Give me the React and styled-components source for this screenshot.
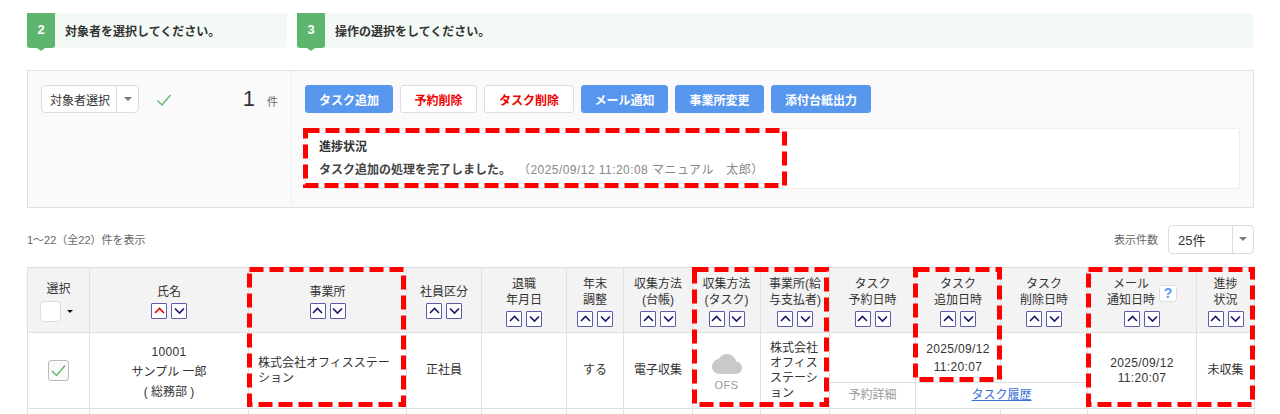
import React from 'react';
import styled, { createGlobalStyle } from 'styled-components';
import { MdCloud } from 'react-icons/md';

const GlobalStyle = createGlobalStyle`
  html, body {
    margin: 0;
    height: 414px;
    overflow: hidden;
    background: #fff;
    color: #333;
    font-family: "Liberation Sans", "Noto Sans CJK JP", sans-serif;
    font-size: 12px;
  }
`;

const Page = styled.div`
  position: relative;
  width: 1280px;
  height: 414px;
  overflow: hidden;
  box-sizing: border-box;
  padding: 13px 26px 0 27px;
`;

const Steps = styled.div`
  display: flex;
  gap: 10px;
`;

const Step = styled.div`
  display: flex;
  align-items: center;
  flex: ${(p) => (p.$wide ? '1' : '0 0 260px')};
  height: 35px;
  padding-bottom: 1px;
  box-sizing: border-box;
  background: #f3f9f4;
  border-radius: 3px;
  font-weight: 700;
  color: #333;
`;

const StepNumber = styled.span`
  position: relative;
  width: 28px;
  height: 35px;
  margin: 1px 10px 0 0;
  display: flex;
  align-items: center;
  justify-content: center;
  padding-bottom: 2px;
  box-sizing: border-box;
  background: #5eb56e;
  border-radius: 0 0 3px 3px;
  color: #fff;
  font-size: 13px;
  font-weight: 700;

  &::after {
    content: '';
    position: absolute;
    left: 10px;
    bottom: -3px;
    border-style: solid;
    border-width: 3px 4px 0 4px;
    border-color: #5eb56e transparent transparent transparent;
  }
`;

const Panel = styled.div`
  display: flex;
  height: 138px;
  margin-top: 22px;
  box-sizing: border-box;
  background: #fafafa;
  border: 1px solid #e0e0e0;
`;

const PanelLeft = styled.div`
  flex: 0 0 264px;
  box-sizing: border-box;
  display: flex;
  align-items: flex-start;
  padding: 14px 13px;
  border-right: 1px solid #eeeeee;
`;

const PanelRight = styled.div`
  flex: 1;
  box-sizing: border-box;
  padding: 14px 13px 19px 13px;
  display: flex;
  flex-direction: column;
  gap: 15px;
`;

const SelectBox = styled.div`
  display: flex;
  align-items: stretch;
  box-sizing: border-box;
  width: ${(p) => p.$width}px;
  height: ${(p) => p.$height}px;
  background: #fff;
  border: 1px solid #dcdcdc;
  border-radius: 4px;
  color: #333;
  font-size: ${(p) => p.$size}px;
`;

const SelectLabel = styled.span`
  flex: 1;
  display: flex;
  align-items: center;
  padding-left: ${(p) => p.$pad}px;
  border-right: 1px solid #dcdcdc;
  white-space: nowrap;
`;

const SelectArrow = styled.span`
  flex: 0 0 ${(p) => p.$width}px;
  display: flex;
  align-items: center;
  justify-content: center;

  &::after {
    content: '';
    border-style: solid;
    border-width: 4px 4px 0 4px;
    border-color: #777 transparent transparent transparent;
  }
`;

const CheckMark = styled.svg`
  width: 16px;
  height: 16px;
  margin: 7px 0 0 17px;
  fill: none;
  stroke: #5eb56e;
  stroke-width: 1.4;
`;

const Count = styled.div`
  display: flex;
  align-items: baseline;
  margin-left: auto;
  height: 28px;
  line-height: 28px;
  font-size: 22px;
  color: #333;
`;

const CountUnit = styled.span`
  margin-left: 12px;
  font-size: 11px;
  color: #666;
`;

const Buttons = styled.div`
  display: flex;
  gap: 7px;
`;

const ActionButton = styled.button`
  height: 28px;
  width: ${(p) => p.$width}px;
  padding: 0;
  box-sizing: border-box;
  border-radius: 3px;
  border: 1px solid ${(p) => (p.$danger ? '#dddddd' : '#5897ee')};
  background: ${(p) => (p.$danger ? '#fff' : '#5897ee')};
  color: ${(p) => (p.$danger ? '#f00000' : '#fff')};
  font-family: inherit;
  font-size: 12px;
  font-weight: 700;
`;

const Progress = styled.div`
  flex: 1;
  box-sizing: border-box;
  padding: 9px 13px;
  background: #fff;
  border: 1px solid #eeeeee;
  border-radius: 3px;
`;

const ProgressTitle = styled.div`
  font-weight: 700;
  line-height: 18px;
  color: #333;
`;

const ProgressLine = styled.div`
  margin-top: 5px;
  line-height: 18px;
  font-weight: 700;
  color: #444;
  white-space: pre;
`;

const ProgressMeta = styled.span`
  margin-left: 13px;
  font-weight: 400;
  font-size: 12px;
  letter-spacing: 0.45px;
  color: #888;
`;

const ListBar = styled.div`
  display: flex;
  align-items: center;
  justify-content: space-between;
  height: 30px;
  margin-top: 16px;
  font-size: 11px;
  color: #666;
`;

const PerPage = styled.div`
  display: flex;
  align-items: center;
  gap: 10px;
`;

const Table = styled.table`
  width: 1227px;
  margin-top: 13px;
  table-layout: fixed;
  border-collapse: collapse;
  font-size: 12px;
  color: #333;
`;

const HeadCell = styled.th`
  height: 65px;
  padding: 2px 0 0;
  box-sizing: border-box;
  vertical-align: middle;
  background: #f3f3f3;
  border: 1px solid #e0e0e0;
  font-weight: 400;
  line-height: 16px;
  color: #333;
`;

const HeadTitle = styled.div`
  position: relative;
  white-space: pre-line;
  margin-bottom: 3px;
  padding-right: ${(p) => (p.$help ? '22px' : '0')};
`;

const SortPair = styled.div`
  display: flex;
  justify-content: center;
  gap: 4px;
`;

const SortButton = styled.span`
  width: 16px;
  height: 16px;
  box-sizing: border-box;
  display: flex;
  align-items: center;
  justify-content: center;
  background: #fff;
  border: 1px solid #5c5caa;
  border-radius: 1px;

  svg {
    width: 11px;
    height: 8px;
    fill: none;
    stroke: ${(p) => (p.$active ? '#e8000b' : '#16166a')};
    stroke-width: 1.6;
  }
`;

const HelpBadge = styled.span`
  position: absolute;
  top: 9px;
  right: 19px;
  width: 18px;
  height: 17px;
  box-sizing: border-box;
  display: flex;
  align-items: center;
  justify-content: center;
  background: #fff;
  border: 1px solid #dddddd;
  border-radius: 3px;
  color: #5897ee;
  font-size: 14px;
  font-weight: 700;
`;

const SelectHead = styled.div`
  display: flex;
  align-items: center;
  justify-content: center;
  gap: 6px;
  margin-top: 4px;
  padding-right: 4px;
`;

const HeadCheck = styled.span`
  width: 21px;
  height: 21px;
  box-sizing: border-box;
  background: #fff;
  border: 1px solid #dcdcdc;
  border-radius: 4px;
`;

const HeadCaret = styled.span`
  border-style: solid;
  border-width: 3px 3px 0 3px;
  border-color: #111 transparent transparent transparent;
`;

const Cell = styled.td`
  height: ${(p) => p.$height || 'auto'};
  padding: ${(p) => p.$pad || '0'};
  box-sizing: border-box;
  border: 1px solid #e0e0e0;
  vertical-align: middle;
  text-align: ${(p) => p.$align || 'center'};
  line-height: ${(p) => p.$line || '15px'};
  white-space: pre-line;
  color: #333;
`;

const Numeric = styled.span`
  letter-spacing: 0.35px;
`;

const RowCheck = styled.span`
  display: inline-flex;
  align-items: center;
  justify-content: center;
  width: 21px;
  height: 21px;
  box-sizing: border-box;
  border: 1px solid #bbbbbb;
  border-radius: 3px;
  background: #fafafa;

  svg {
    width: 17px;
    height: 15px;
    fill: none;
    stroke: #5eb56e;
    stroke-width: 1.4;
  }
`;

const Cloud = styled(MdCloud)`
  display: block;
  margin: 0 auto;
  width: 30px;
  height: 30px;
  color: #c9c9c9;
`;

const CloudLabel = styled.div`
  margin-top: -1px;
  font-size: 11px;
  letter-spacing: 0.5px;
  color: #999;
`;

const Muted = styled.span`
  color: #999;
`;

const HistoryLink = styled.a`
  color: #3a6fd8;
  text-decoration: underline;
`;

const Annotation = styled.svg`
  position: absolute;
  left: ${(p) => p.$x}px;
  top: ${(p) => p.$y}px;
  pointer-events: none;
  fill: none;
  stroke: #ff0000;
  stroke-width: 5;
  stroke-dasharray: 14 6;
`;

const columns = [62, 159, 158, 75, 85, 57, 69, 68, 69, 86, 85, 87, 109, 58];

const sortable = [
  { title: '氏名', up: true },
  { title: '事業所' },
  { title: '社員区分' },
  { title: '退職\n年月日' },
  { title: '年末\n調整' },
  { title: '収集方法\n(台帳)' },
  { title: '収集方法\n(タスク)' },
  { title: '事業所(給\n与支払者)' },
  { title: 'タスク\n予約日時' },
  { title: 'タスク\n追加日時' },
  { title: 'タスク\n削除日時' },
  { title: 'メール\n通知日時', help: true },
  { title: '進捗\n状況' },
];

const marks = [
  { x: 303, y: 128, w: 484, h: 60 },
  { x: 247, y: 267, w: 159, h: 140 },
  { x: 692, y: 267, w: 137, h: 140 },
  { x: 913, y: 267, w: 89, h: 115 },
  { x: 1086, y: 267, w: 169, h: 140 },
];

const Chevron = ({ down }) => (
  <svg viewBox="0 0 11 8">
    <path d={down ? 'M1 1.5 5.5 6 10 1.5' : 'M1 6 5.5 1.5 10 6'} />
  </svg>
);

const Sorter = ({ up }) => (
  <SortPair>
    <SortButton $active={up}><Chevron /></SortButton>
    <SortButton><Chevron down /></SortButton>
  </SortPair>
);

const App = () => (
  <Page>
    <GlobalStyle />

    <Steps>
      <Step>
        <StepNumber>2</StepNumber>
        対象者を選択してください。
      </Step>
      <Step $wide>
        <StepNumber>3</StepNumber>
        操作の選択をしてください。
      </Step>
    </Steps>

    <Panel>
      <PanelLeft>
        <SelectBox $width={98} $height={28} $size={12}>
          <SelectLabel $pad={8}>対象者選択</SelectLabel>
          <SelectArrow $width={21} />
        </SelectBox>
        <CheckMark viewBox="0 0 16 16">
          <path d="M1.5 8.5 6 13 14.5 3" />
        </CheckMark>
        <Count>
          1<CountUnit>件</CountUnit>
        </Count>
      </PanelLeft>
      <PanelRight>
        <Buttons>
          <ActionButton $width={88}>タスク追加</ActionButton>
          <ActionButton $width={77} $danger>予約削除</ActionButton>
          <ActionButton $width={90} $danger>タスク削除</ActionButton>
          <ActionButton $width={87}>メール通知</ActionButton>
          <ActionButton $width={89}>事業所変更</ActionButton>
          <ActionButton $width={100}>添付台紙出力</ActionButton>
        </Buttons>
        <Progress>
          <ProgressTitle>進捗状況</ProgressTitle>
          <ProgressLine>
            タスク追加の処理を完了しました。
            <ProgressMeta>（2025/09/12 11:20:08 マニュアル　太郎）</ProgressMeta>
          </ProgressLine>
        </Progress>
      </PanelRight>
    </Panel>

    <ListBar>
      <span>1～22（全22）件を表示</span>
      <PerPage>
        表示件数
        <SelectBox $width={86} $height={29} $size={13}>
          <SelectLabel $pad={9}>25件</SelectLabel>
          <SelectArrow $width={20} />
        </SelectBox>
      </PerPage>
    </ListBar>

    <Table>
      <colgroup>
        {columns.map((width, i) => <col key={i} width={width} />)}
      </colgroup>
      <thead>
        <tr>
          <HeadCell>
            選択
            <SelectHead>
              <HeadCheck />
              <HeadCaret />
            </SelectHead>
          </HeadCell>
          {sortable.map((col) => (
            <HeadCell key={col.title}>
              <HeadTitle $help={col.help}>
                {col.title}
                {col.help && <HelpBadge>?</HelpBadge>}
              </HeadTitle>
              <Sorter up={col.up} />
            </HeadCell>
          ))}
        </tr>
      </thead>
      <tbody>
        <tr>
          <Cell rowSpan={2}>
            <RowCheck>
              <svg viewBox="0 0 17 15"><path d="M2 8 6.5 12.5 15 2.5" /></svg>
            </RowCheck>
          </Cell>
          <Cell rowSpan={2} $line="20px" $pad="2px 0 0">
            <Numeric>10001</Numeric>
            {'\nサンプル 一郎\n( 総務部 )'}
          </Cell>
          <Cell rowSpan={2} $align="left" $pad="0 9px">株式会社オフィスステーション</Cell>
          <Cell rowSpan={2}>正社員</Cell>
          <Cell rowSpan={2} />
          <Cell rowSpan={2}>する</Cell>
          <Cell rowSpan={2}>電子収集</Cell>
          <Cell rowSpan={2}>
            <Cloud />
            <CloudLabel>OFS</CloudLabel>
          </Cell>
          <Cell rowSpan={2} $align="left" $pad="0 9px">株式会社オフィスステーション</Cell>
          <Cell $height="50px" />
          <Cell $height="50px" $line="18px"><Numeric>{'2025/09/12\n11:20:07'}</Numeric></Cell>
          <Cell $height="50px" />
          <Cell rowSpan={2}><Numeric>{'2025/09/12\n11:20:07'}</Numeric></Cell>
          <Cell rowSpan={2}>未収集</Cell>
        </tr>
        <tr>
          <Cell $height="26px"><Muted>予約詳細</Muted></Cell>
          <Cell $height="26px" colSpan={2}><HistoryLink href="#">タスク履歴</HistoryLink></Cell>
        </tr>
        <tr>
          {columns.map((width, i) => <Cell key={i} $height="30px" />)}
        </tr>
      </tbody>
    </Table>

    {marks.map((m) => (
      <Annotation key={m.x} $x={m.x} $y={m.y} width={m.w} height={m.h}>
        <rect x="2.5" y="2.5" width={m.w - 5} height={m.h - 5} />
      </Annotation>
    ))}
  </Page>
);

export default App;
